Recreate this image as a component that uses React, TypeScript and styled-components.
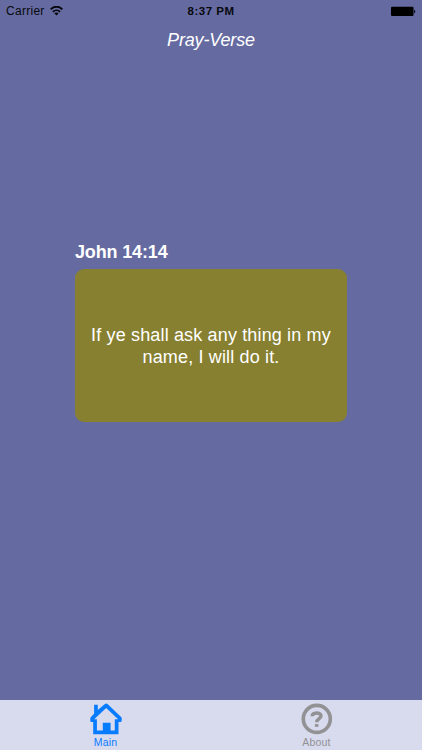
import React from "react";
import styled, { createGlobalStyle } from "styled-components";

const GlobalStyle = createGlobalStyle`
  * { box-sizing: border-box; }
  body { margin: 0; background: #656ba1; }
`;

const Screen = styled.div`
  display: flex;
  flex-direction: column;
  width: 100%;
  height: 750px;
  overflow: hidden;
  background: #656ba1;
  font-family: "Liberation Sans", Arial, sans-serif;
`;

const StatusBar = styled.header`
  display: grid;
  grid-template-columns: 1fr auto 1fr;
  align-items: center;
  height: 22px;
  padding: 0 6px;
  color: #08090f;
  font-size: 12px;
  line-height: 22px;
`;

const Carrier = styled.div`
  display: flex;
  align-items: center;
  gap: 5px;
  letter-spacing: 0.28px;
`;

const Clock = styled.div`
  font-weight: 700;
  font-size: 11.5px;
  letter-spacing: 0.5px;
`;

const BatterySlot = styled.div`
  display: flex;
  justify-content: flex-end;
`;

const Title = styled.h1`
  margin: 6px 0 0;
  height: 24px;
  color: #fff;
  font-size: 18px;
  font-style: italic;
  font-weight: 400;
  line-height: 24px;
  letter-spacing: -0.15px;
  text-align: center;
`;

const Passage = styled.main`
  flex: 1;
  width: 272px;
  margin: 0 auto;
  padding-top: 188px;
`;

const Citation = styled.h2`
  margin: 0;
  height: 29px;
  color: #fff;
  font-size: 18px;
  font-weight: 700;
  line-height: 25px;
  letter-spacing: -0.15px;
`;

const VerseCard = styled.section`
  display: flex;
  align-items: center;
  justify-content: center;
  height: 153px;
  border-radius: 9px;
  background: #878031;
`;

const Verse = styled.p`
  margin: 0;
  color: #fff;
  font-size: 18px;
  line-height: 22px;
  letter-spacing: 0.15px;
  text-align: center;
`;

const TabBar = styled.nav`
  display: grid;
  grid-template-columns: 1fr 1fr;
  height: 50px;
  background: #d8daee;
`;

const Tab = styled.a<{ $active?: boolean }>`
  display: flex;
  flex-direction: column;
  align-items: center;
  padding-top: 3px;
  color: ${(p) => (p.$active ? "#087cff" : "#929295")};
  font-size: 10.5px;
  line-height: 12px;
  letter-spacing: 0.2px;
`;

const TabIcon = styled.svg`
  display: block;
  width: 32px;
  height: 32px;
  margin-bottom: 1px;
`;

const WifiIcon = () => (
  <svg width="13" height="10" viewBox="0 0 13 10" fill="none" stroke="currentColor" strokeWidth="1.9">
    <path d="M.7 3.4C4-.2 9-.2 12.3 3.4M2.9 5.9c2-2 5.2-2 7.2 0" />
    <path d="M4.3 7.2c1.2-1.1 3.2-1.1 4.4 0L6.5 9.5z" fill="currentColor" stroke="none" />
  </svg>
);

const BatteryIcon = () => (
  <svg width="26" height="11" viewBox="0 0 26 11" fill="#000">
    <rect x="1" y="0.7" width="22.5" height="9.3" rx="1" />
    <path d="M24.1 3.7c1.6.4 1.6 3.2 0 3.6z" />
  </svg>
);

const HouseIcon = () => (
  <TabIcon viewBox="0 0 32 32" fill="currentColor">
    <path
      fillRule="evenodd"
      d="M4.1 1.7h3.7v5.4L14.6 1.2q1.6-1.2 3.2 0L31.4 14.3q.8 2-.2 4.7h-2.7v12.2H3.2V19H.7q-.9-2.7 0-4.7l3.4-3.5zM16.2 5.1L4.2 16.2h2.7v11.4h5.9v-7.9h7.8v7.9h4.2V16.2h3.3z"
    />
  </TabIcon>
);

const HelpIcon = () => (
  <TabIcon viewBox="0 0 32 32" fill="none" stroke="currentColor">
    <circle cx="15.8" cy="15.9" r="13.5" strokeWidth="3.6" />
    <path d="M11.2 13.3c.1-4.3 8.8-4.4 8.8-.4 0 2.8-4.3 2.8-4.3 6.4" strokeWidth="3.4" />
    <path d="M13.9 21.1h3.5v2.7h-3.5z" fill="currentColor" stroke="none" />
  </TabIcon>
);

export default function App() {
  return (
    <>
      <GlobalStyle />
      <Screen>
        <StatusBar>
          <Carrier>
            Carrier
            <WifiIcon />
          </Carrier>
          <Clock>8:37 PM</Clock>
          <BatterySlot>
            <BatteryIcon />
          </BatterySlot>
        </StatusBar>
        <Title>Pray-Verse</Title>
        <Passage>
          <Citation>John 14:14</Citation>
          <VerseCard>
            <Verse>
              If ye shall ask any thing in my
              <br />
              name, I will do it.
            </Verse>
          </VerseCard>
        </Passage>
        <TabBar>
          <Tab $active>
            <HouseIcon />
            Main
          </Tab>
          <Tab>
            <HelpIcon />
            About
          </Tab>
        </TabBar>
      </Screen>
    </>
  );
}
